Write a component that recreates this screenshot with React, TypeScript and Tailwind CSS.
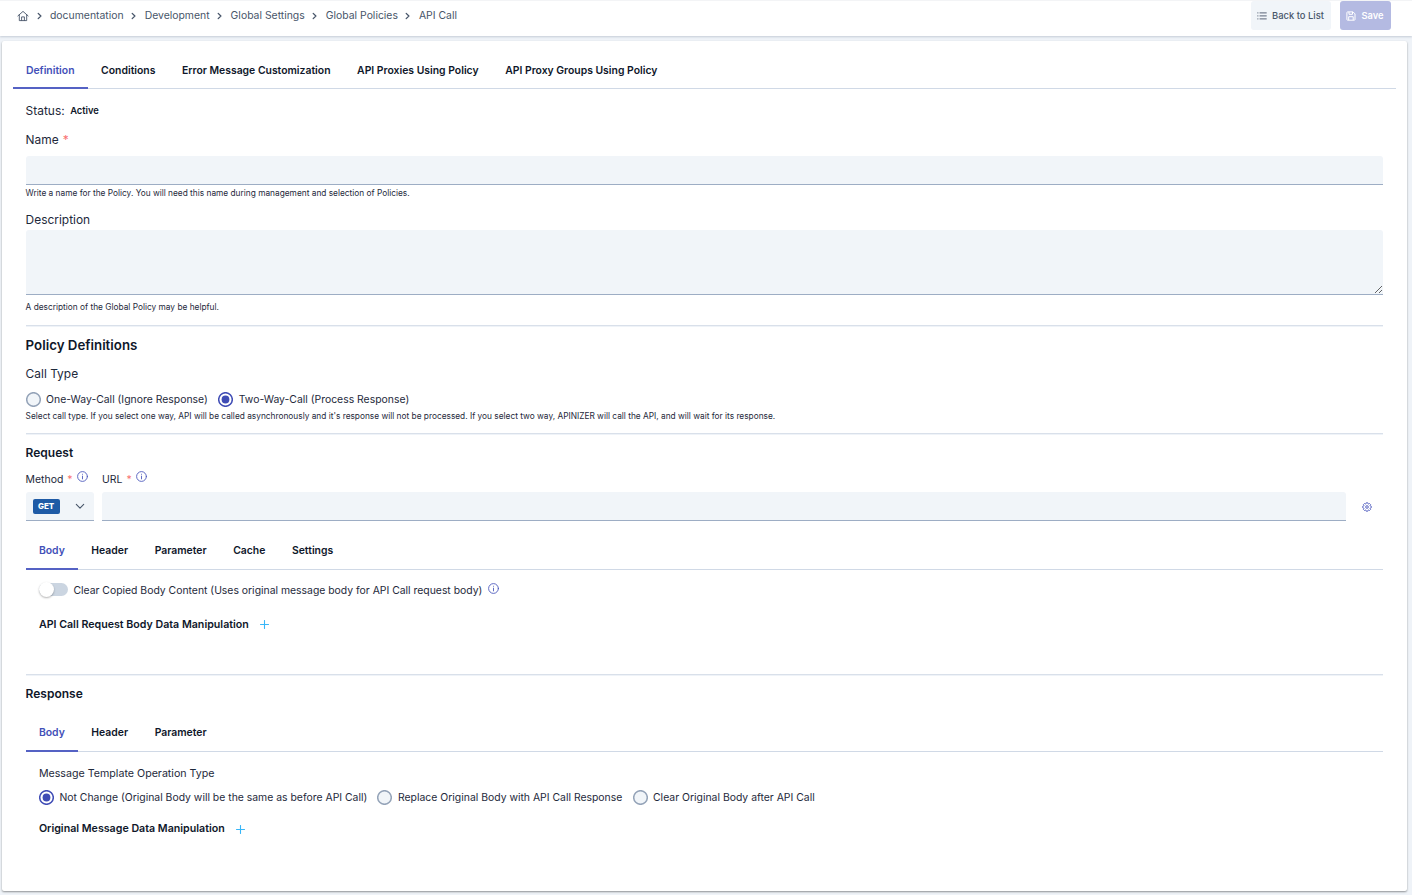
import clsx from "clsx";
import { ReactNode } from "react";

const crumbs = ["documentation", "Development", "Global Settings", "Global Policies", "API Call"];
const mainTabs = [
  "Definition",
  "Conditions",
  "Error Message Customization",
  "API Proxies Using Policy",
  "API Proxy Groups Using Policy",
];

function HomeIcon() {
  return (
    <svg width="12" height="12" viewBox="0 0 12 12" fill="none" stroke="#475569" strokeWidth="0.9" strokeLinecap="round" strokeLinejoin="round">
      <path d="M.9 5.9 6 1.4l5.1 4.5" />
      <path d="M2.3 4.9v5.7h7.4V4.9" />
      <path d="M4.6 10.4V6.9h2.8v3.5" />
    </svg>
  );
}

function ChevronRight() {
  return (
    <svg width="6" height="8" viewBox="0 0 6 8" fill="none" stroke="#475569" strokeWidth="1.3" strokeLinecap="round" strokeLinejoin="round">
      <path d="M1.2 1.4 3.9 4 1.2 6.6" />
    </svg>
  );
}

function ListIcon() {
  return (
    <svg width="10" height="10" viewBox="0 0 10 10" fill="none" stroke="#475569" strokeWidth="0.9" strokeLinecap="round">
      <path d="M3 1.9h6.3M3 4.9h6.3M3 7.9h6.3M.7 1.9h.3M.7 4.9h.3M.7 7.9h.3" />
    </svg>
  );
}

function SaveIcon() {
  return (
    <svg width="10" height="10" viewBox="0 0 10 10" fill="none" stroke="#fff" strokeWidth="1" strokeLinejoin="round">
      <path d="M1.6.9h5.4l2 2v5.6a.7.7 0 0 1-.7.7H1.6a.7.7 0 0 1-.7-.7V1.6a.7.7 0 0 1 .7-.7Z" />
      <path d="M3 1v2.3h3.5V1M2.7 9V5.7h4.5V9" />
    </svg>
  );
}

function InfoIcon() {
  return (
    <svg width="11" height="11" viewBox="0 0 11 11" fill="none" stroke="#4f5bbd" strokeWidth="0.9" strokeLinecap="round">
      <circle cx="5.5" cy="5.5" r="4.9" />
      <path d="M5.5 5.1v2.8M5.5 3.2v.1" />
    </svg>
  );
}

function GearIcon() {
  return (
    <svg width="10" height="10" viewBox="0 0 10 10" fill="none" stroke="#5b67c4" strokeWidth="1" strokeLinejoin="round">
      <path d="M4.2.8h1.6l.3 1 .5.2.9-.5 1.1 1.1-.5.9.2.5 1 .3v1.4l-1 .3-.2.5.5.9-1.1 1.1-.9-.5-.5.2-.3 1H4.2l-.3-1-.5-.2-.9.5-1.1-1.1.5-.9-.2-.5-1-.3V4.3l1-.3.2-.5-.5-.9 1.1-1.1.9.5.5-.2Z" />
      <circle cx="5" cy="5" r="1.3" />
    </svg>
  );
}

function PlusIcon() {
  return (
    <svg width="9" height="9" viewBox="0 0 9 9" fill="none" stroke="#38b6f8" strokeWidth="1.1" strokeLinecap="round">
      <path d="M4.5.5v8M.5 4.5h8" />
    </svg>
  );
}

function Tabs({ items, className }: { items: string[]; className?: string }) {
  return (
    <div className={clsx("flex h-[37px] border-b border-[#d0d9e6] text-[10.4px] font-semibold", className)}>
      {items.map((item, i) => (
        <button
          key={item}
          className={clsx(
            "-mb-px h-[37px] border-b-2 px-[13.3px] whitespace-nowrap",
            className ? "pt-px" : "pt-[3px]",
            i === 0 ? "border-[#5562c4] text-[#4350b8]" : "border-transparent text-[#0f172a]"
          )}
        >
          {item}
        </button>
      ))}
    </div>
  );
}

function Radio({ label, checked }: { label: string; checked?: boolean }) {
  return (
    <label className="flex items-center gap-[5.5px] text-[10.42px]">
      <svg width="15" height="15" viewBox="0 0 15 15" strokeWidth="1.5">
        <circle cx="7.5" cy="7.5" r="6.8" fill={checked ? "#fff" : "#f1f5f9"} stroke={checked ? "#3f4cb5" : "#94a3b8"} />
        {checked && <circle cx="7.5" cy="7.5" r="3.9" fill="#3f4cb5" />}
      </svg>
      <span className="whitespace-nowrap">{label}</span>
    </label>
  );
}

function Hint({ children }: { children: ReactNode }) {
  return <p className="h-3 text-[8.32px] leading-3 whitespace-nowrap">{children}</p>;
}

function Required() {
  return <span className="text-[#f87171]">*</span>;
}

function Divider() {
  return <div className="h-0.5 border-t border-[#d9e0ea] bg-[#eff3f8]" />;
}

export default function App() {
  return (
    <div className="flex h-[895px] w-[1412px] flex-col overflow-hidden bg-[#eff3f8] font-['Inter',sans-serif] text-[#1e293b]">
      <header className="flex h-9 shrink-0 justify-between border-t border-[#f3f4f6] bg-white pr-[21px] pl-[17px] shadow-[0_1px_2px_rgba(100,116,139,0.3)]">
        <nav className="flex h-[29px] items-center text-[10.42px] text-[#475569]">
          <HomeIcon />
          {crumbs.map((crumb) => (
            <span key={crumb} className="flex items-center">
              <span className="mx-[7.5px]">
                <ChevronRight />
              </span>
              {crumb}
            </span>
          ))}
        </nav>
        <div className="flex h-[29px] gap-[9px]">
          <button className="flex w-20 items-center justify-center gap-[5px] rounded-[3px] bg-[#f1f5f9] pr-px text-[9.4px] font-medium whitespace-nowrap text-[#475569]">
            <ListIcon />
            <span className="pt-px">Back to List</span>
          </button>
          <button className="flex w-[51px] items-center justify-center gap-[5px] rounded-[3px] bg-[#b4bae2] pr-px text-[9.3px] font-semibold text-white">
            <SaveIcon />
            <span>Save</span>
          </button>
        </div>
      </header>

      <main className="mt-[5px] mr-[5px] ml-0.5 h-[850px] rounded-[2px] bg-white pt-[11px] pr-[11px] pl-[10.6px] shadow-[0_1px_2px_rgba(0,0,0,0.4)]">
        <Tabs items={mainTabs} />
        <div className="px-[13px] pt-3">
          <div className="flex h-5 items-center gap-[5.5px] text-[11.95px]">
            Status: <span className="pt-px text-[9.4px] font-semibold text-[#0f172a]">Active</span>
          </div>

          <label className="mt-[9px] flex h-5 items-center gap-1 text-[11.95px]">
            Name <Required />
          </label>
          <input className="mt-1.5 block h-[29px] w-full rounded-t-[3px] border-b border-[#9dadc4] bg-[#f1f5f9]" />
          <div className="mt-0.5">
            <Hint>Write a name for the Policy. You will need this name during management and selection of Policies.</Hint>
          </div>

          <label className="mt-[11px] flex h-5 items-center text-[11.95px]">Description</label>
          <textarea className="block h-[65px] w-full resize rounded-t-[3px] border-b border-[#9dadc4] bg-[#f1f5f9]" />
          <div className="mt-1.5 mb-3">
            <Hint>A description of the Global Policy may be helpful.</Hint>
          </div>

          <Divider />
          <h2 className="mt-[9px] flex h-5 items-center text-[13.3px] font-semibold text-[#0f172a]">Policy Definitions</h2>
          <div className="mt-2 flex h-5 items-center text-[11.95px]">Call Type</div>
          <div className="mt-2 flex h-[15px] gap-[10.5px]">
            <Radio label="One-Way-Call (Ignore Response)" />
            <Radio label="Two-Way-Call (Process Response)" checked />
          </div>
          <div className="mt-[3px] mb-[11px]">
            <Hint>
              Select call type. If you select one way, API will be called asynchronously and it's response will not be
              processed. If you select two way, APINIZER will call the API, and will wait for its response.
            </Hint>
          </div>

          <Divider />
          <h3 className="mt-2 flex h-5 items-center text-[12px] font-semibold text-[#0f172a]">Request</h3>
          <div className="mt-[7px] flex">
            <div className="w-[76.4px] shrink-0">
              <div className="flex h-5 items-center gap-1 text-[10.45px]">
                Method <Required />
                <span className="mb-2 ml-[0.5px]">
                  <InfoIcon />
                </span>
              </div>
              <div className="mt-0.5 flex h-[29px] w-[68px] items-center justify-between rounded-t-[3px] border-b border-[#9dadc4] bg-[#f1f5f9] pr-[9px] pl-[7px]">
                <span className="flex h-[15px] w-[27px] items-center justify-center rounded-[2px] bg-[#1f5ba6] text-[8px] font-extrabold text-white">
                  GET
                </span>
                <svg width="10" height="10" viewBox="0 0 10 10" fill="none" stroke="#475569" strokeWidth="1.1" strokeLinecap="round" strokeLinejoin="round">
                  <path d="m1.3 3.4 3.7 3.7 3.7-3.7" />
                </svg>
              </div>
            </div>
            <div className="w-[1244px]">
              <div className="flex h-5 items-center gap-1 text-[10.45px]">
                URL <Required />
                <span className="mb-2 ml-[0.5px]">
                  <InfoIcon />
                </span>
              </div>
              <input className="mt-0.5 block h-[29px] w-full rounded-t-[3px] border-b border-[#9dadc4] bg-[#f1f5f9]" />
            </div>
            <button className="mt-[22px] ml-4 flex h-[29px] items-center">
              <GearIcon />
            </button>
          </div>

          <Tabs items={["Body", "Header", "Parameter", "Cache", "Settings"]} className="mt-3" />
          <div className="h-[104px] px-[13.3px] pt-3">
            <div className="flex h-4 items-center text-[10.4px]">
              <span className="mb-0.5 flex h-[13px] w-[29px] items-center rounded-full bg-[#cbd5e1]">
                <span className="size-[15px] shrink-0 rounded-full bg-white shadow-[0_1px_2px_rgba(0,0,0,0.3)]" />
              </span>
              <span className="mt-px ml-[5.5px] whitespace-nowrap">
                Clear Copied Body Content (Uses original message body for API Call request body)
              </span>
              <span className="mb-1 ml-[5.5px]">
                <InfoIcon />
              </span>
            </div>
            <div className="mt-4 flex h-5 items-center gap-[11.3px] text-[10.66px] font-semibold text-[#0f172a]">
              <span className="pt-px">API Call Request Body Data Manipulation</span> <PlusIcon />
            </div>
          </div>

          <Divider />
          <h3 className="mt-2 flex h-5 items-center text-[12px] font-semibold text-[#0f172a]">Response</h3>
          <Tabs items={["Body", "Header", "Parameter"]} className="mt-[11px]" />
          <div className="px-[13.3px] pt-3">
            <div className="flex h-5 items-center text-[10.66px]">Message Template Operation Type</div>
            <div className="mt-1.5 flex h-[15px] gap-[10.2px]">
              <Radio label="Not Change (Original Body will be the same as before API Call)" checked />
              <Radio label="Replace Original Body with API Call Response" />
              <Radio label="Clear Original Body after API Call" />
            </div>
            <div className="mt-[14px] flex h-5 items-center gap-[11.3px] text-[10.66px] font-semibold text-[#0f172a]">
              <span>Original Message Data Manipulation</span> <PlusIcon />
            </div>
          </div>
        </div>
      </main>
    </div>
  );
}
